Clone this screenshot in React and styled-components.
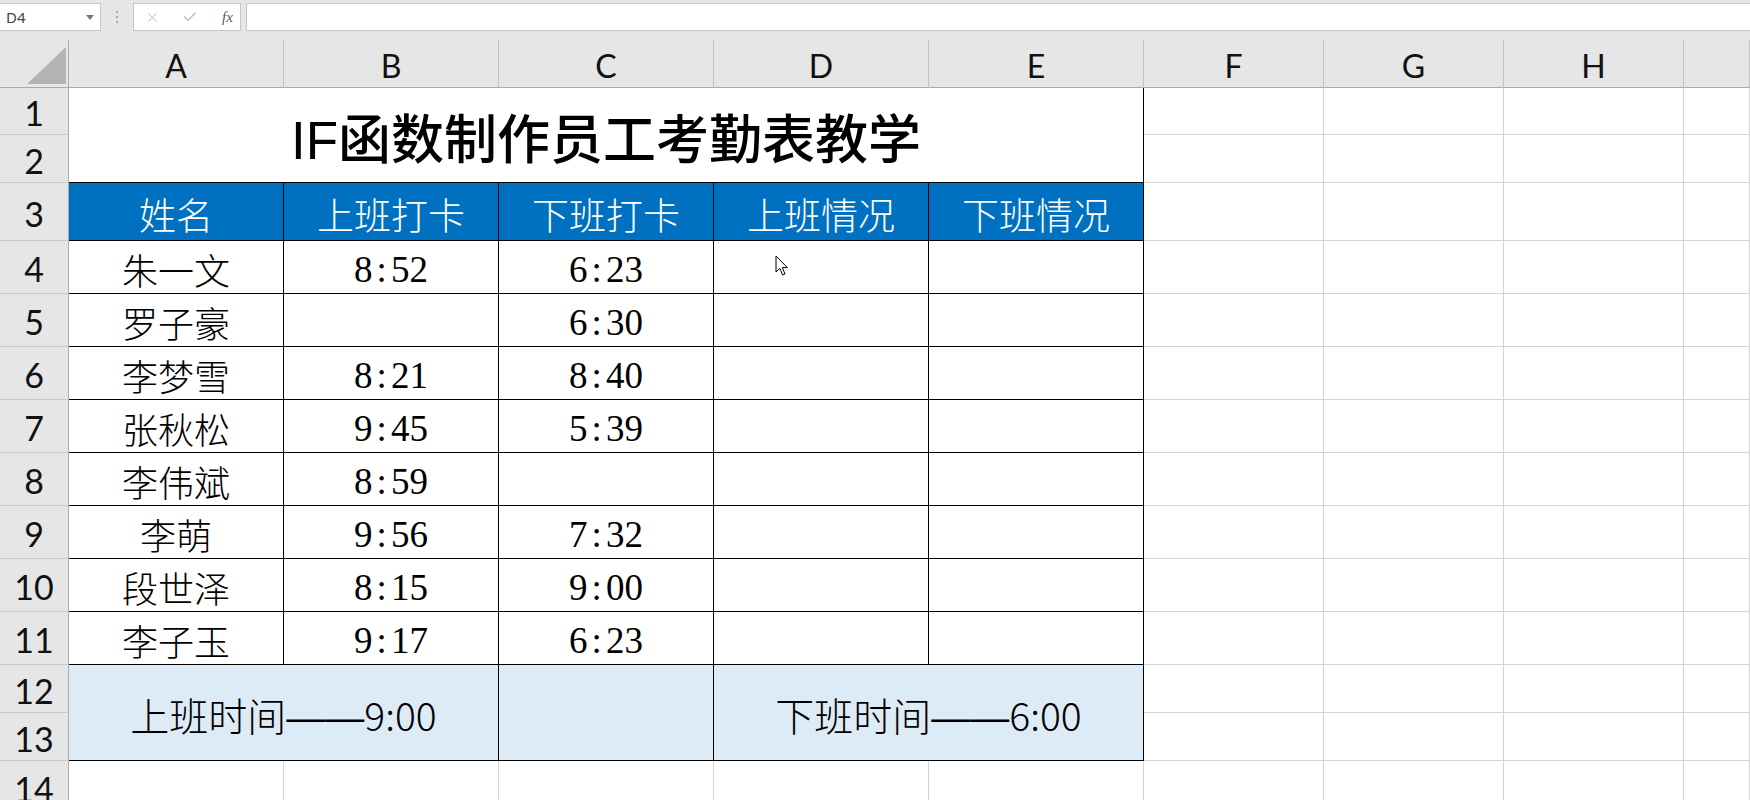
import React from 'react';
import styled, { createGlobalStyle } from 'styled-components';
import { X, Check } from 'lucide-react';

const GlobalStyle = createGlobalStyle`
  html, body {
    margin: 0;
    padding: 0;
    background: #ffffff;
    overflow: hidden;
  }
  body {
    width: 1750px;
    height: 800px;
    font-family: "Noto Sans", "Noto Sans CJK SC", sans-serif;
  }
`;

const Page = styled.div`
  position: relative;
  width: 1750px;
  height: 800px;
  overflow: hidden;
  background: #ffffff;
`;

// formula bar on top
const TopBar = styled.div`
  height: 40px;
  background: #e6e6e6;
  display: flex;
  align-items: flex-start;
  padding-top: 3px;
  box-sizing: border-box;
`;

const NameBox = styled.div`
  width: 101px;
  height: 28px;
  box-sizing: border-box;
  background: #fff;
  border: 1px solid #c6c6c6;
  border-left: none;
  display: flex;
  align-items: center;
  justify-content: space-between;
  padding: 0 6px 0 6px;
  font-family: "Noto Sans", sans-serif;
  font-size: 15px;
  color: #444;
`;

const DropArrow = styled.span`
  width: 0;
  height: 0;
  border-left: 4px solid transparent;
  border-right: 4px solid transparent;
  border-top: 5px solid #777;
`;

const Grip = styled.div`
  width: 32px;
  height: 28px;
  display: flex;
  flex-direction: column;
  align-items: center;
  justify-content: center;
  gap: 3px;
`;

const Dot = styled.span`
  width: 2px;
  height: 2px;
  background: #a8a8a8;
`;

const FormulaButtons = styled.div`
  width: 108px;
  height: 28px;
  box-sizing: border-box;
  background: #fff;
  border: 1px solid #c6c6c6;
  display: flex;
  align-items: center;
  padding-left: 11px;
  gap: 22px;
  color: #b3b3b3;
`;

const FxLabel = styled.span`
  font-family: "Liberation Serif", serif;
  font-style: italic;
  font-size: 15px;
  color: #5a5a5a;
  margin-left: 2px;
`;

const FormulaInput = styled.div`
  flex: 1;
  height: 28px;
  margin-left: 5px;
  box-sizing: border-box;
  background: #fff;
  border: 1px solid #c6c6c6;
  border-right: none;
`;

// the worksheet grid
const Sheet = styled.div`
  display: grid;
  grid-template-columns: 69px repeat(5, 215px) repeat(3, 180px) 1fr;
  grid-template-rows: 48px 47px 48px 58px repeat(8, 53px) 48px 48px 53px;
`;

const Corner = styled.div`
  grid-column: 1;
  grid-row: 1;
  background: #e6e6e6;
  border-right: 1px solid #ababab;
  border-bottom: 1px solid #ababab;
  box-sizing: border-box;
  position: relative;
`;

const CornerMark = styled.svg`
  position: absolute;
  left: 27px;
  top: 7px;
`;

const ColHeader = styled.div`
  grid-row: 1;
  grid-column: ${({ $col }) => $col};
  background: #e6e6e6;
  border-right: 1px solid #c3c3c3;
  border-bottom: 1px solid #ababab;
  box-sizing: border-box;
  display: flex;
  align-items: center;
  justify-content: center;
  padding-top: 4px;
  font-family: Lato, "Noto Sans", sans-serif;
  font-size: 32px;
  color: #111;
`;

const RowHeader = styled.div`
  grid-column: 1;
  grid-row: ${({ $row }) => $row + 1};
  background: #e6e6e6;
  border-right: 1px solid #ababab;
  border-bottom: 1px solid #c8c8c8;
  box-sizing: border-box;
  display: flex;
  align-items: center;
  justify-content: center;
  padding-top: 3px;
  font-family: Lato, "Noto Sans", sans-serif;
  font-size: 34px;
  color: #111;
`;

const Cell = styled.div`
  grid-column: ${({ $col, $span = 1 }) => `${$col} / span ${$span}`};
  grid-row: ${({ $row, $rows = 1 }) => `${$row + 1} / span ${$rows}`};
  background: ${({ $fill }) => $fill || '#ffffff'};
  border-right: 1px solid ${({ $ruled }) => ($ruled ? '#000' : '#d4d4d4')};
  border-bottom: 1px solid ${({ $ruled }) => ($ruled ? '#000' : '#d4d4d4')};
  box-sizing: border-box;
  display: flex;
  align-items: center;
  justify-content: center;
  padding-top: ${({ $pad = 0 }) => $pad}px;
  overflow: hidden;
  white-space: nowrap;
`;

const Title = styled.span`
  font-family: "Liberation Sans", "Noto Sans CJK SC", sans-serif;
  font-size: 53px;
  font-weight: 500;
  color: #000;
  padding-top: 2px;
`;

const HeadText = styled.span`
  font-family: "Noto Sans CJK SC", sans-serif;
  font-weight: 300;
  font-size: 37px;
  color: #fff;
`;

const NameText = styled.span`
  font-family: "Noto Sans CJK SC", sans-serif;
  font-weight: 300;
  font-size: 36px;
  color: #000;
`;

const TimeText = styled.span`
  font-family: "Liberation Serif", serif;
  font-size: 37px;
  color: #000;
`;

const Colon = styled.span`
  display: inline-block;
  width: 0.5em;
  text-align: center;
`;

const FooterText = styled.span`
  font-family: "Noto Sans CJK SC", sans-serif;
  font-weight: 300;
  font-size: 39px;
  color: #000;
`;

const Dash = styled.span`
  font-family: "Liberation Sans", sans-serif;
  font-weight: 400;
`;

const Cursor = styled.svg`
  position: absolute;
  left: 775px;
  top: 255px;
`;

const columns = ['A', 'B', 'C', 'D', 'E', 'F', 'G', 'H', ''];
const heads = ['姓名', '上班打卡', '下班打卡', '上班情况', '下班情况'];
const people = [
  ['朱一文', '8:52', '6:23'],
  ['罗子豪', '', '6:30'],
  ['李梦雪', '8:21', '8:40'],
  ['张秋松', '9:45', '5:39'],
  ['李伟斌', '8:59', ''],
  ['李萌', '9:56', '7:32'],
  ['段世泽', '8:15', '9:00'],
  ['李子玉', '9:17', '6:23'],
];

const Time = ({ value }) => {
  if (!value) return null;
  const [h, m] = value.split(':');
  return (
    <TimeText>
      {h}
      <Colon>:</Colon>
      {m}
    </TimeText>
  );
};

// empty gridline cells for columns F onwards
const Blank = ({ row, rows }) =>
  [7, 8, 9, 10].map((col) => <Cell key={`${row}-${col}`} $col={col} $row={row} $rows={rows} />);

const App = () => {
  return (
    <Page>
      <GlobalStyle />
      <TopBar>
        <NameBox>
          D4
          <DropArrow />
        </NameBox>
        <Grip>
          <Dot />
          <Dot />
          <Dot />
        </Grip>
        <FormulaButtons>
          <X size={15} strokeWidth={1.4} />
          <Check size={16} strokeWidth={1.6} />
          <FxLabel>fx</FxLabel>
        </FormulaButtons>
        <FormulaInput />
      </TopBar>

      <Sheet>
        <Corner>
          <CornerMark width="39" height="37" viewBox="0 0 39 37">
            <polygon points="0,37 39,37 39,0" fill="#b4b4b4" />
          </CornerMark>
        </Corner>
        {columns.map((c, i) => (
          <ColHeader key={i} $col={i + 2}>
            {c}
          </ColHeader>
        ))}

        {Array.from({ length: 14 }, (_, i) => (
          <RowHeader key={i} $row={i + 1}>
            {i + 1}
          </RowHeader>
        ))}

        <Cell $col={2} $span={5} $row={1} $rows={2} $ruled>
          <Title>IF函数制作员工考勤表教学</Title>
        </Cell>
        {[1, 2].map((r) => (
          <Blank key={r} row={r} />
        ))}

        {heads.map((h, i) => (
          <Cell key={h} $col={i + 2} $row={3} $fill="#0070c0" $ruled $pad={4}>
            <HeadText>{h}</HeadText>
          </Cell>
        ))}
        <Blank row={3} />

        {people.map(([name, on, off], i) => (
          <React.Fragment key={name}>
            <Cell $col={2} $row={i + 4} $ruled $pad={4}>
              <NameText>{name}</NameText>
            </Cell>
            <Cell $col={3} $row={i + 4} $ruled $pad={4}>
              <Time value={on} />
            </Cell>
            <Cell $col={4} $row={i + 4} $ruled $pad={4}>
              <Time value={off} />
            </Cell>
            <Cell $col={5} $row={i + 4} $ruled />
            <Cell $col={6} $row={i + 4} $ruled />
            <Blank row={i + 4} />
          </React.Fragment>
        ))}

        <Cell $col={2} $span={2} $row={12} $rows={2} $fill="#ddebf7" $ruled $pad={2}>
          <FooterText>
            上班时间<Dash>——</Dash>9:00
          </FooterText>
        </Cell>
        <Cell $col={4} $row={12} $rows={2} $fill="#ddebf7" $ruled />
        <Cell $col={5} $span={2} $row={12} $rows={2} $fill="#ddebf7" $ruled $pad={2}>
          <FooterText>
            下班时间<Dash>——</Dash>6:00
          </FooterText>
        </Cell>
        <Blank row={12} />
        <Blank row={13} />

        {[2, 3, 4, 5, 6].map((col) => (
          <Cell key={col} $col={col} $row={14} />
        ))}
        <Blank row={14} />
      </Sheet>

      <Cursor width="14" height="22" viewBox="0 0 14 22">
        <path
          d="M1 1 L1 17 L4.8 13.4 L7.6 20 L10 19 L7.3 12.6 L12.4 12.6 Z"
          fill="#fff"
          stroke="#000"
          strokeWidth="1"
          strokeLinejoin="round"
        />
      </Cursor>
    </Page>
  );
};

export default App;
